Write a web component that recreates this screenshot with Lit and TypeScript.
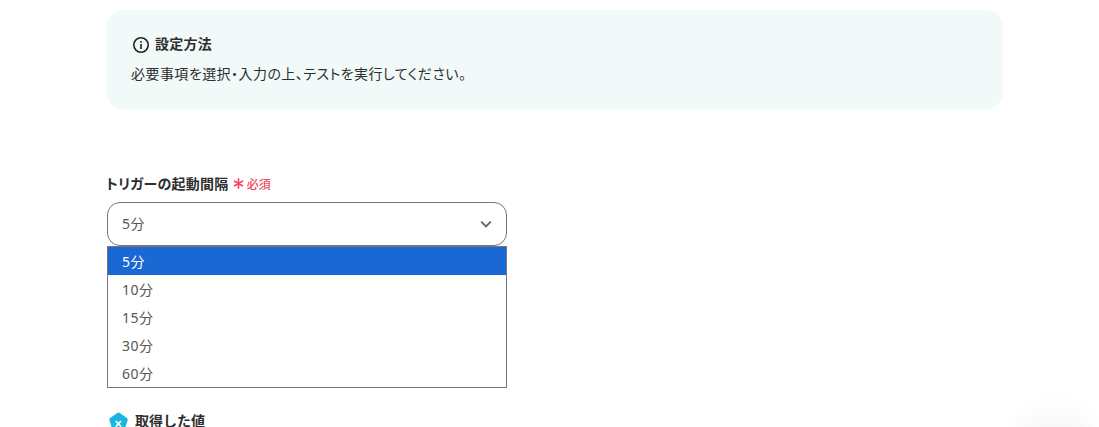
import { LitElement, html, css } from 'lit';
import { customElement } from 'lit/decorators.js';

const OPTIONS = ['5分', '10分', '15分', '30分', '60分'];

@customElement('app-root')
export class AppRoot extends LitElement {
  static styles = css`
    :host {
      display: block;
      position: relative;
      height: 427px;
      overflow: hidden;
      background: #fff;
      font-family: "Noto Sans", "Noto Sans CJK JP", sans-serif;
      color: #2e2e2e;
    }
    .page {
      padding: 10px 96px 0 107px;
    }
    /* info card */
    .card {
      height: 99px;
      box-sizing: border-box;
      background: #f1faf9;
      border-radius: 16px;
      padding: 23px 24px 0;
    }
    .card-title {
      display: flex;
      align-items: center;
      gap: 5px;
      height: 22px;
      padding-left: 1px;
      font-size: 14px;
      font-weight: 700;
      line-height: 22px;
      letter-spacing: 0.25px;
    }
    .card-title svg {
      margin-top: 1px;
    }
    .card-body {
      margin-top: 8px;
      font-size: 14px;
      line-height: 22px;
      font-feature-settings: "palt";
      letter-spacing: 0.45px;
    }
    /* field */
    .field {
      width: 400px;
      margin-top: 63px;
    }
    .label {
      display: flex;
      align-items: center;
      height: 22px;
      margin-left: -1px;
      font-size: 14px;
      font-weight: 700;
      font-feature-settings: "palt";
      letter-spacing: 0.25px;
    }
    .req {
      display: flex;
      align-items: center;
      gap: 3px;
      margin-left: 4px;
      margin-top: 1px;
      color: #f04a5e;
      font-size: 12px;
      font-weight: 500;
      letter-spacing: 0;
    }
    .select {
      display: flex;
      align-items: center;
      justify-content: space-between;
      box-sizing: border-box;
      height: 44px;
      margin-top: 8px;
      padding: 0 13px 0 14px;
      border: 1px solid #757575;
      border-radius: 13px;
      font-size: 14px;
      color: #555;
    }
    .select span {
      margin-top: -2px;
      letter-spacing: 0.5px;
    }
    .list {
      box-sizing: border-box;
      height: 142px;
      border: 1px solid #767676;
      font-size: 14px;
      color: #555;
    }
    .opt {
      height: 28px;
      line-height: 29px;
      padding-left: 14px;
      letter-spacing: 0.5px;
    }
    .opt.on {
      background: #1a68d4;
      color: #fff;
    }
    /* next section */
    .values {
      display: flex;
      align-items: center;
      gap: 6px;
      height: 22px;
      margin-top: 22px;
      margin-left: 1px;
      font-size: 14px;
      font-weight: 700;
    }
    .values span {
      margin-top: -2px;
    }
    .glow {
      position: absolute;
      right: 5px;
      bottom: -42px;
      width: 80px;
      height: 60px;
      border-radius: 50%;
      background: #f8f8f8;
      filter: blur(10px);
    }
  `;

  render() {
    return html`
      <div class="page">
        <div class="card">
          <div class="card-title">
            <svg width="18" height="18" viewBox="0 0 18 18" fill="none">
              <circle cx="9" cy="9" r="7.2" stroke="#222" stroke-width="1.6"/>
              <rect x="8.2" y="8" width="1.6" height="5" fill="#222"/>
              <rect x="8.2" y="5" width="1.6" height="1.7" fill="#222"/>
            </svg>
            <span>設定方法</span>
          </div>
          <div class="card-body">必要事項を選択・入力の上、テストを実行してください。</div>
        </div>

        <div class="field">
          <div class="label">
            <span>トリガーの起動間隔</span>
            <span class="req">
              <svg width="11" height="11" viewBox="0 0 10 10" stroke="#f04a5e" stroke-width="1.5" stroke-linecap="round">
                <path d="M5 .8v8.4M1.4 2.9l7.2 4.2M8.6 2.9L1.4 7.1"/>
              </svg>
              <span>必須</span>
            </span>
          </div>
          <div class="select">
            <span>5分</span>
            <svg width="14" height="14" viewBox="0 0 14 14" fill="none">
              <path d="M2.2 4.6L7 9.4l4.8-4.8" stroke="#666" stroke-width="1.9"/>
            </svg>
          </div>
          <div class="list">
            ${OPTIONS.map((o, i) => html`<div class="opt ${i === 0 ? 'on' : ''}">${o}</div>`)}
          </div>
          <div class="values">
            <svg width="21" height="21" viewBox="0 0 21 21">
              <path d="M10.5 1.5a2 2 0 0 1 1.2.4l7.2 5.2a2 2 0 0 1 .7 2.2l-2.7 8.5a2 2 0 0 1-1.9 1.4H6a2 2 0 0 1-1.9-1.4L1.4 9.3a2 2 0 0 1 .7-2.2l7.2-5.2a2 2 0 0 1 1.2-.4z" fill="#18b7e0"/>
              <path d="M7.8 10l5.2 5.6M13 10l-5.2 5.6" stroke="#fff" stroke-width="1.7"/>
            </svg>
            <span>取得した値</span>
          </div>
        </div>
      </div>
      <div class="glow"></div>
    `;
  }
}
